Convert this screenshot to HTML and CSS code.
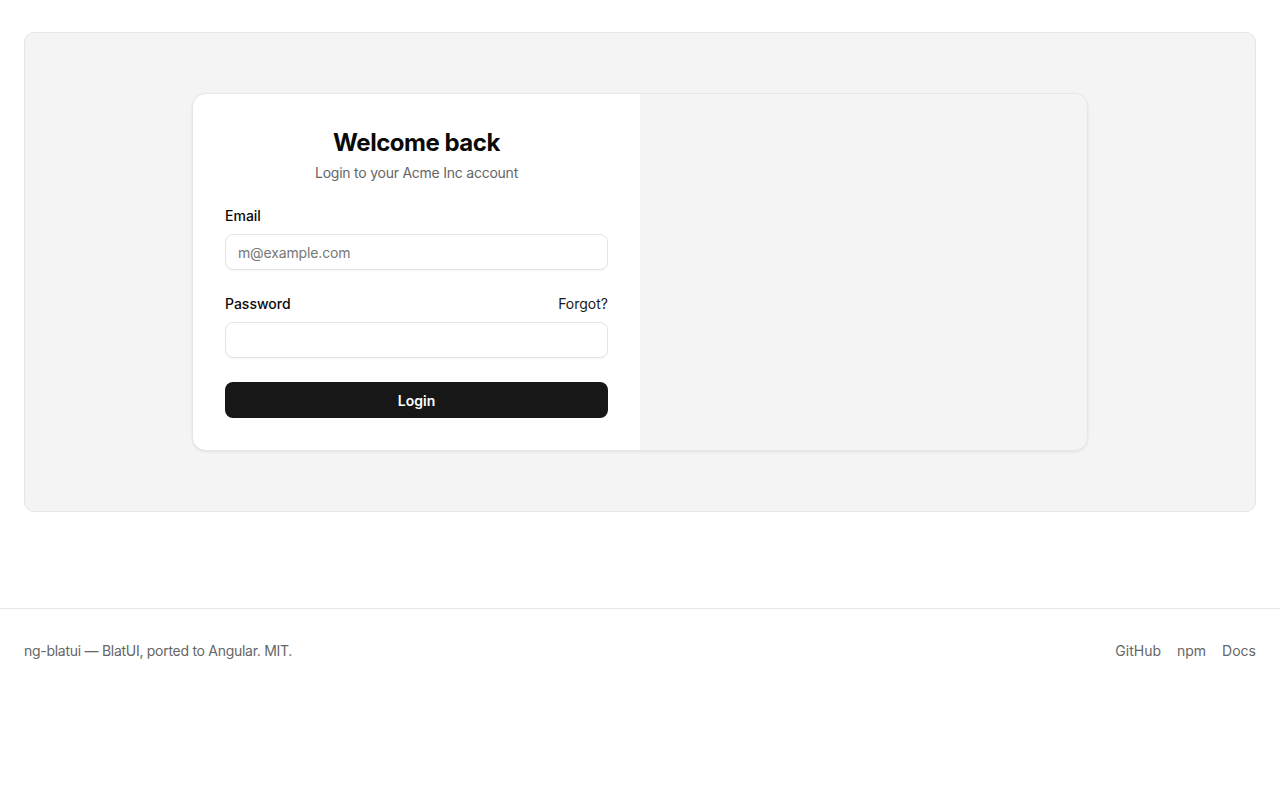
FILE: index.html
```html
<!DOCTYPE html>
<html lang="en">
<head>
<meta charset="utf-8">
<title>Login</title>
<link rel="stylesheet" href="styles.css">
</head>
<body>
<main class="main">
  <section class="preview">
    <div class="card">
      <form class="card-form">
        <div class="card-head">
          <h1 class="title">Welcome back</h1>
          <p class="subtitle">Login to your Acme Inc account</p>
        </div>
        <div class="field">
          <label class="label" for="email">Email</label>
          <input class="input" id="email" type="email" placeholder="m@example.com">
        </div>
        <div class="field">
          <div class="label-row">
            <label class="label" for="password">Password</label>
            <a class="forgot" href="#">Forgot?</a>
          </div>
          <input class="input" id="password" type="password">
        </div>
        <button class="btn" type="button">Login</button>
      </form>
      <div class="card-side"></div>
    </div>
  </section>
</main>
<footer class="footer">
  <span class="footer-text">ng-blatui — BlatUI, ported to Angular. MIT.</span>
  <nav class="footer-links">
    <a href="#">GitHub</a>
    <a href="#">npm</a>
    <a href="#">Docs</a>
  </nav>
</footer>
</body>
</html>
```

FILE: styles.css
```css
* { box-sizing: border-box; }
html, body { margin: 0; padding: 0; background: #fff; }
body {
  font-family: Inter, "Noto Sans", sans-serif;
  color: #0a0a0a;
  -webkit-font-smoothing: antialiased;
}
.main { padding: 32px 24px 96px; }
.preview {
  background: #f4f4f4;
  border: 1px solid #e6e6e6;
  border-radius: 10px;
  min-height: 480px;
  display: flex;
  align-items: center;
  justify-content: center;
}
.card {
  width: 896px;
  display: grid;
  grid-template-columns: 1fr 1fr;
  background: #fff;
  border: 1px solid #e6e6e6;
  border-radius: 14px;
  overflow: hidden;
  box-shadow: 0 1px 3px rgba(0,0,0,0.08);
}
.card-form {
  padding: 33px 32px 32px;
  display: flex;
  flex-direction: column;
  gap: 24px;
  margin: 0;
}
.card-side { background: #f4f4f4; }
.card-head {
  text-align: center;
  display: flex;
  flex-direction: column;
  gap: 4px;
  margin-bottom: -1px;
}
.title { margin: 0; font-size: 24px; line-height: 32px; font-weight: 700; letter-spacing: -0.02em; }
.subtitle { margin: 0; font-size: 14px; line-height: 20px; color: #666; letter-spacing: -0.017em; }
.field { display: flex; flex-direction: column; gap: 8px; }
.label { font-size: 14px; line-height: 20px; font-weight: 500; }
.label-row { display: flex; justify-content: space-between; align-items: center; }
.forgot { font-size: 14px; line-height: 20px; color: #171717; text-decoration: none; }
.input {
  height: 36px;
  width: 100%;
  border: 1px solid #e4e4e4;
  border-radius: 8px;
  padding: 0 12px;
  font: inherit;
  font-size: 14px;
  color: #0a0a0a;
  background: #fff;
  box-shadow: 0 1px 2px rgba(0,0,0,0.04);
  outline: none;
}
.input::placeholder { color: #777; letter-spacing: -0.01em; }
.btn {
  height: 36px;
  border: 0;
  border-radius: 8px;
  background: #171717;
  color: #fff;
  font: inherit;
  font-size: 14px;
  font-weight: 600;
  cursor: pointer;
}
.footer {
  border-top: 1px solid #e6e6e6;
  padding: 32px 24px;
  display: flex;
  justify-content: space-between;
  align-items: center;
  font-size: 14px;
  line-height: 20px;
  color: #666;
}
.footer-text { letter-spacing: -0.02em; }
.footer-links { display: flex; gap: 16px; }
.footer-links a { color: #666; text-decoration: none; }
```
